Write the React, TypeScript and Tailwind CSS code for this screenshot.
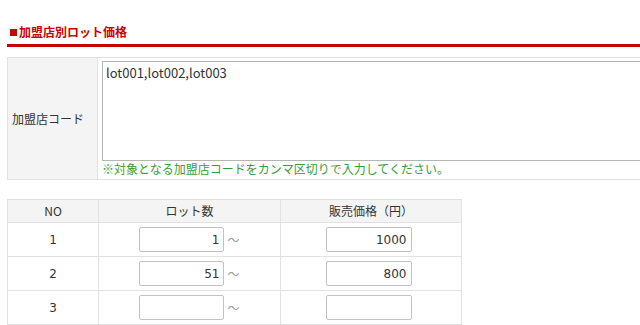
const rows = [
  { no: 1, lot: '1', price: '1000' },
  { no: 2, lot: '51', price: '800' },
  { no: 3, lot: '', price: '' },
]

const jp = { fontFamily: '"Noto Sans CJK JP", "Noto Sans", sans-serif' }
const num = { fontFamily: '"DejaVu Sans", Verdana, sans-serif' }

export default function App() {
  return (
    <div className="w-[640px] h-[325px] overflow-hidden bg-white text-[#333]" style={jp}>
      <div className="w-[760px] pl-[7px] pt-[23px]">
        {/* Section heading */}
        <h2 className="flex items-center pl-[3px] pb-[3px] text-[12px] leading-[18px] font-bold text-[#cc0000] border-b-[3px] border-[#cc0000]">
          <span className="inline-block w-[7px] h-[7px] mr-[2px] bg-[#cc0000]" />
          加盟店別ロット価格
        </h2>

        {/* Franchise code */}
        <table className="mt-[10px] w-full border-collapse">
          <tbody>
            <tr>
              <th className="w-[90px] bg-[#f4f4f4] border border-[#e2e2e2] pl-[4px] text-left text-[12px] font-normal align-middle">
                加盟店コード
              </th>
              <td className="border border-[#e2e2e2] pl-[4px] pt-[3px] pb-[2px]">
                <textarea
                  defaultValue="lot001,lot002,lot003"
                  className="block w-[620px] h-[100px] border border-[#b5b5b5] px-[3px] py-[2px] text-[13px] leading-[17px] resize-none outline-none"
                  style={jp}
                />
                <p className="text-[12px] leading-[16px] text-[#3c9a3c]">
                  ※対象となる加盟店コードをカンマ区切りで入力してください。
                </p>
              </td>
            </tr>
          </tbody>
        </table>

        {/* Lot price table */}
        <table className="mt-[19px] w-[455px] border-collapse text-[12px]">
          <thead>
            <tr className="h-[23px] bg-[#f3f4f3]">
              <th className="w-[91px] p-0 border border-[#e2e2e2] font-normal">NO</th>
              <th className="w-[182px] p-0 border border-[#e2e2e2] font-normal">ロット数</th>
              <th className="p-0 border border-[#e2e2e2] font-normal">販売価格（円）</th>
            </tr>
          </thead>
          <tbody>
            {rows.map((r) => (
              <tr key={r.no} className="h-[34px]">
                <td className="p-0 border border-[#e2e2e2] text-center" style={num}>
                  {r.no}
                </td>
                <td className="p-0 border border-[#e2e2e2]">
                  <div className="flex items-center justify-center">
                    <input
                      defaultValue={r.lot}
                      className="w-[85px] h-[25px] border border-[#c2c2c2] rounded-[2px] px-[4px] text-right text-[12px] outline-none"
                      style={num}
                    />
                    <span className="ml-[3px] text-[#999]">～</span>
                  </div>
                </td>
                <td className="p-0 border border-[#e2e2e2]">
                  <div className="flex justify-center pr-[5px]">
                    <input
                      defaultValue={r.price}
                      className="w-[86px] h-[25px] border border-[#c2c2c2] rounded-[2px] px-[4px] text-right text-[12px] outline-none"
                      style={num}
                    />
                  </div>
                </td>
              </tr>
            ))}
          </tbody>
        </table>
      </div>
    </div>
  )
}
